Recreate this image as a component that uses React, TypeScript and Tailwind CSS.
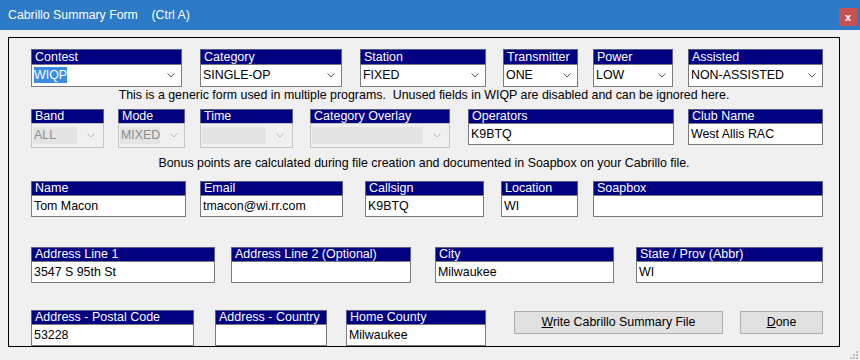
import React from "react";

const Chevron = ({ disabled }: { disabled?: boolean }) => (
  <svg width="8" height="5" viewBox="0 0 8 5" className="shrink-0">
    <path
      d="M0.5 0.5 L4 4 L7.5 0.5"
      fill="none"
      stroke={disabled ? "#b8b8b8" : "#5a5a5a"}
      strokeWidth="1"
    />
  </svg>
);

type FieldProps = {
  label: string;
  box: string;
  labelH?: string;
  inputH?: string;
  value?: string;
  combo?: boolean;
  disabled?: boolean;
  selected?: boolean;
};

const Field: React.FC<FieldProps> = ({
  label,
  box,
  labelH = "h-[15px]",
  inputH = "h-[22px]",
  value = "",
  combo,
  disabled,
  selected,
}) => (
  <div className={`flex flex-col shrink-0 ${box}`}>
    <div
      className={`${labelH} bg-[#000080] text-white text-[12.5px] leading-none pl-[3px] flex items-end pb-[1px] border-x border-t border-[#5c5c88] whitespace-nowrap overflow-hidden`}
    >
      {label}
    </div>
    {disabled ? (
      <div
        className={`${inputH} border border-[#c4c4c4] bg-[#f0f0f0] flex items-center pr-[8px] text-[12.4px]`}
      >
        <div className="flex-1 self-stretch my-[3px] ml-[1px] mr-[10px] bg-[#e4e4e4] text-[#8d8d8d] pl-[1px] flex items-center">
          {value}
        </div>
        <Chevron disabled />
      </div>
    ) : (
      <div
        className={`${inputH} border border-[#7a7a7a] bg-white flex items-center text-[12.4px] text-black ${
          combo ? "pl-[2px] pr-[6px]" : "pl-[2px]"
        }`}
      >
        <div className="flex-1">
          {selected ? (
            <span className="bg-[#3c8ddf] text-white py-[1px]">{value}</span>
          ) : (
            value
          )}
        </div>
        {combo && <Chevron />}
      </div>
    )}
  </div>
);

const Button = ({ box, children }: { box: string; children: React.ReactNode }) => (
  <div
    className={`${box} h-[23px] shrink-0 bg-[#e1e1e1] border border-[#adadad] flex items-center justify-center text-[12.4px] text-black`}
  >
    {children}
  </div>
);

export default function App() {
  return (
    <div className="w-[860px] h-[360px] bg-[#f0f0f0] font-['Liberation_Sans',Arial,sans-serif] overflow-hidden">
      <div className="h-[30px] bg-[#2d7ac6] flex items-center justify-between pl-[8px] pr-[3px]">
        <span className="text-white text-[12.3px] whitespace-pre">
          Cabrillo Summary Form    (Ctrl A)
        </span>
        <div className="w-[18px] h-[18px] bg-[#c75050] flex items-center justify-center text-white text-[11px] font-bold leading-none mt-[4px]">
          x
        </div>
      </div>

      <div className="mt-[7px] ml-[8px] w-[832px] h-[310px] border border-black flex flex-col">
        <div className="flex mt-[11px]">
          <Field label="Contest" box="ml-[22px] w-[151px]" inputH="h-[23px]" value="WIQP" combo selected />
          <Field label="Category" box="ml-[18px] w-[142px]" inputH="h-[23px]" value="SINGLE-OP" combo />
          <Field label="Station" box="ml-[18px] w-[126px]" inputH="h-[23px]" value="FIXED" combo />
          <Field label="Transmitter" box="ml-[17px] w-[75px]" inputH="h-[23px]" value="ONE" combo />
          <Field label="Power" box="ml-[15px] w-[80px]" inputH="h-[23px]" value="LOW" combo />
          <Field label="Assisted" box="ml-[15px] w-[135px]" inputH="h-[23px]" value="NON-ASSISTED" combo />
        </div>

        <div className="h-[16px] leading-[16px] text-[12.4px] text-black text-center whitespace-pre">
          This is a generic form used in multiple programs.  Unused fields in WIQP are disabled and can be ignored here.
        </div>

        <div className="flex items-start mt-[6px]">
          <Field label="Band" box="ml-[22px] w-[73px]" labelH="h-[14px]" inputH="h-[25px]" value="ALL" disabled />
          <Field label="Mode" box="ml-[14px] w-[67px]" labelH="h-[14px]" inputH="h-[25px]" value="MIXED" disabled />
          <Field label="Time" box="ml-[15px] w-[93px]" labelH="h-[14px]" inputH="h-[25px]" disabled />
          <Field label="Category Overlay" box="ml-[17px] w-[140px]" labelH="h-[14px]" inputH="h-[25px]" disabled />
          <Field label="Operators" box="ml-[18px] w-[206px]" labelH="h-[14px]" value="K9BTQ" />
          <Field label="Club Name" box="ml-[14px] w-[135px]" labelH="h-[14px]" value="West Allis RAC" />
        </div>

        <div className="mt-[7px] h-[16px] leading-[16px] text-[12.4px] text-black text-center">
          Bonus points are calculated during file creation and documented in Soapbox on your Cabrillo file.
        </div>

        <div className="flex mt-[10px]">
          <Field label="Name" box="ml-[22px] w-[155px]" labelH="h-[14px]" value="Tom Macon" />
          <Field label="Email" box="ml-[14px] w-[143px]" labelH="h-[14px]" value="tmacon@wi.rr.com" />
          <Field label="Callsign" box="ml-[22px] w-[119px]" labelH="h-[14px]" value="K9BTQ" />
          <Field label="Location" box="ml-[17px] w-[77px]" labelH="h-[14px]" value="WI" />
          <Field label="Soapbox" box="ml-[15px] w-[230px]" labelH="h-[14px]" />
        </div>

        <div className="flex mt-[30px]">
          <Field label="Address Line 1" box="ml-[22px] w-[184px]" labelH="h-[14px]" value="3547 S 95th St" />
          <Field label="Address Line 2 (Optional)" box="ml-[16px] w-[180px]" labelH="h-[14px]" />
          <Field label="City" box="ml-[24px] w-[179px]" labelH="h-[14px]" value="Milwaukee" />
          <Field label="State / Prov (Abbr)" box="ml-[22px] w-[187px]" labelH="h-[14px]" value="WI" />
        </div>

        <div className="flex items-start mt-[27px]">
          <Field label="Address - Postal Code" box="ml-[22px] w-[163px]" labelH="h-[14px]" value="53228" />
          <Field label="Address - Country" box="ml-[21px] w-[112px]" labelH="h-[14px]" />
          <Field label="Home County" box="ml-[19px] w-[140px]" labelH="h-[14px]" value="Milwaukee" />
          <Button box="ml-[28px] mt-[1px] w-[209px]">
            <span>
              <span className="underline">W</span>rite Cabrillo Summary File
            </span>
          </Button>
          <Button box="ml-[17px] mt-[1px] w-[83px]">
            <span>
              <span className="underline">D</span>one
            </span>
          </Button>
        </div>
      </div>

      <div className="flex justify-end pr-[2px] mt-[4px]">
        <svg width="8" height="8" viewBox="0 0 8 8">
          <rect x="6" y="0" width="2" height="2" fill="#bdbdbd" />
          <rect x="3" y="3" width="2" height="2" fill="#bdbdbd" />
          <rect x="6" y="3" width="2" height="2" fill="#bdbdbd" />
          <rect x="0" y="6" width="2" height="2" fill="#bdbdbd" />
          <rect x="3" y="6" width="2" height="2" fill="#bdbdbd" />
          <rect x="6" y="6" width="2" height="2" fill="#bdbdbd" />
        </svg>
      </div>
    </div>
  );
}
